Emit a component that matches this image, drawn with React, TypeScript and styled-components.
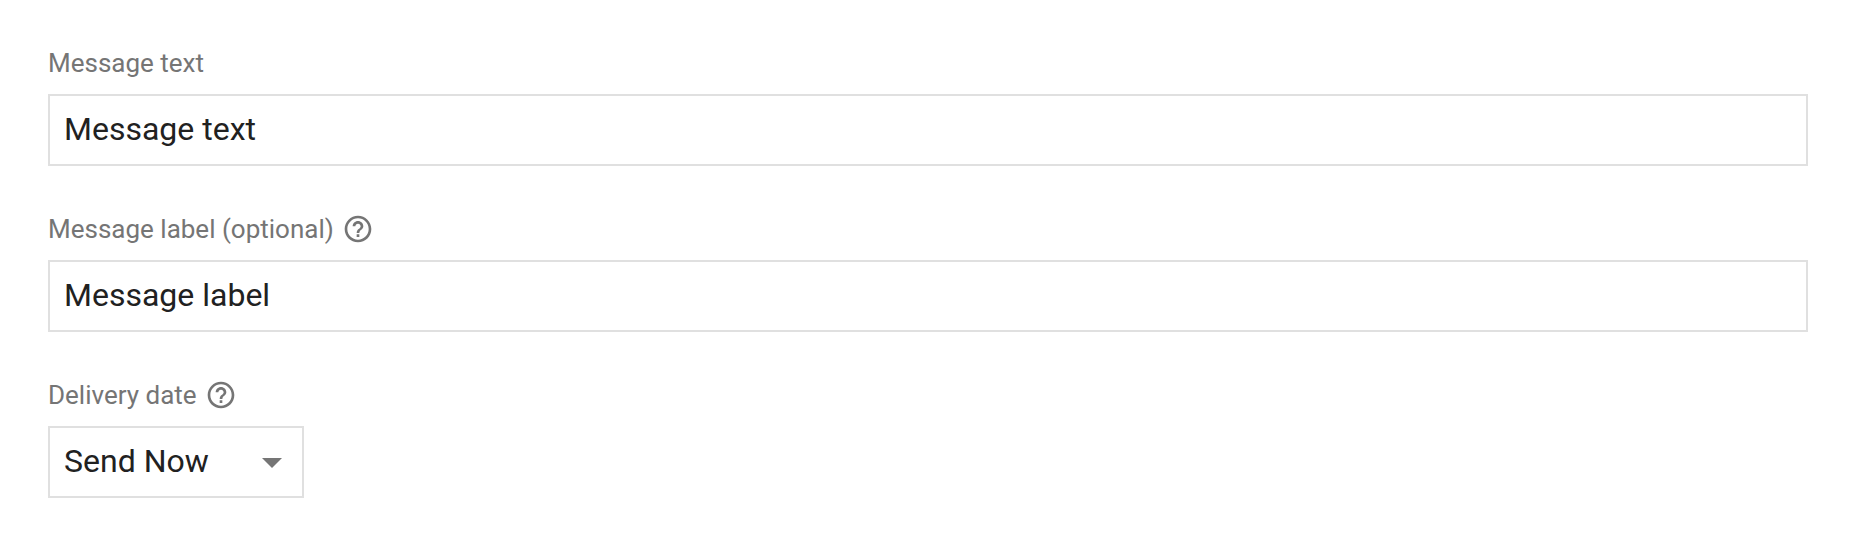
import React from "react";
import styled, { createGlobalStyle } from "styled-components";

const Global = createGlobalStyle`
  html, body { margin: 0; padding: 0; background: #fff; }
  body { font-family: Roboto, "Liberation Sans", sans-serif; }
`;

const Form = styled.form`
  display: flex;
  flex-direction: column;
  gap: 47px;
  padding: 47px 54px 46px 48px;
`;

const Field = styled.div`
  display: flex;
  flex-direction: column;
  align-items: flex-start;
`;

const LabelRow = styled.div`
  display: flex;
  align-items: center;
  gap: 8px;
  height: 32px;
  margin-bottom: 15px;
`;

const Label = styled.label`
  font-size: 26px;
  line-height: 32px;
  color: #757575;
`;

const HelpIcon = styled.svg`
  width: 32px;
  height: 32px;
  fill: #757575;
  display: block;
`;

const TextInput = styled.input`
  box-sizing: border-box;
  width: 100%;
  height: 72px;
  border: 2px solid #e0e0e0;
  border-radius: 0;
  outline: none;
  padding: 0 14px 2px;
  font: 400 32px Roboto, "Liberation Sans", sans-serif;
  color: #212121;
  background: #fff;
`;

const Select = styled.div`
  box-sizing: border-box;
  width: 256px;
  height: 72px;
  border: 2px solid #e0e0e0;
  padding: 0 20px 2px 14px;
  display: flex;
  align-items: center;
  justify-content: space-between;
  font-size: 32px;
  color: #212121;
`;

const Caret = styled.span`
  width: 0;
  height: 0;
  border-left: 10px solid transparent;
  border-right: 10px solid transparent;
  border-top: 10px solid #757575;
  margin-top: 4px;
`;

const Help = () => (
  <HelpIcon viewBox="0 0 24 24" aria-hidden="true">
    <path d="M11 18h2v-2h-2v2zm1-16C6.48 2 2 6.48 2 12s4.48 10 10 10 10-4.48 10-10S17.52 2 12 2zm0 18c-4.41 0-8-3.59-8-8s3.59-8 8-8 8 3.59 8 8-3.59 8-8 8zm0-14c-2.21 0-4 1.79-4 4h2c0-1.1.9-2 2-2s2 .9 2 2c0 2-3 1.75-3 5h2c0-2.25 3-2.5 3-5 0-2.21-1.79-4-4-4z" />
  </HelpIcon>
);

export default function App() {
  return (
    <>
      <Global />
      <Form>
        <Field>
          <LabelRow><Label>Message text</Label></LabelRow>
          <TextInput defaultValue="Message text" />
        </Field>
        <Field>
          <LabelRow><Label>Message label (optional)</Label><Help /></LabelRow>
          <TextInput defaultValue="Message label" />
        </Field>
        <Field>
          <LabelRow><Label>Delivery date</Label><Help /></LabelRow>
          <Select>Send Now<Caret /></Select>
        </Field>
      </Form>
    </>
  );
}
